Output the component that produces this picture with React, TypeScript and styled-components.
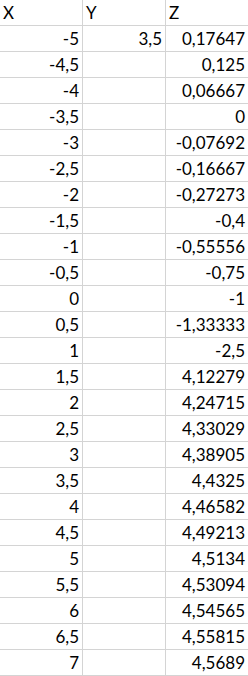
import React from 'react';
import styled, { createGlobalStyle } from 'styled-components';

const rows: [string, string, string][] = [
  ['-5', '3,5', '0,17647'],
  ['-4,5', '', '0,125'],
  ['-4', '', '0,06667'],
  ['-3,5', '', '0'],
  ['-3', '', '-0,07692'],
  ['-2,5', '', '-0,16667'],
  ['-2', '', '-0,27273'],
  ['-1,5', '', '-0,4'],
  ['-1', '', '-0,55556'],
  ['-0,5', '', '-0,75'],
  ['0', '', '-1'],
  ['0,5', '', '-1,33333'],
  ['1', '', '-2,5'],
  ['1,5', '', '4,12279'],
  ['2', '', '4,24715'],
  ['2,5', '', '4,33029'],
  ['3', '', '4,38905'],
  ['3,5', '', '4,4325'],
  ['4', '', '4,46582'],
  ['4,5', '', '4,49213'],
  ['5', '', '4,5134'],
  ['5,5', '', '4,53094'],
  ['6', '', '4,54565'],
  ['6,5', '', '4,55815'],
  ['7', '', '4,5689'],
];

const headers = ['X', 'Y', 'Z'];

export default function App() {
  return (
    <>
      <GlobalStyle />
      <Sheet>
        {headers.map(h => (
          <Cell key={h} $header>
            {h}
          </Cell>
        ))}
        {rows.map((row, i) =>
          row.map((value, j) => <Cell key={`${i}-${j}`}>{value}</Cell>)
        )}
      </Sheet>
    </>
  );
}

const GlobalStyle = createGlobalStyle`
  html, body {
    margin: 0;
    background: #ffffff;
    overflow: hidden;
  }
`;

const Sheet = styled.div`
  display: grid;
  grid-template-columns: 83px 83px 83px;
  grid-auto-rows: 26px;
  width: 249px;
  font-family: Lato, 'Open Sans', sans-serif;
  font-size: 17px;
  color: #000000;
`;

const Cell = styled.div<{ $header?: boolean }>`
  box-sizing: border-box;
  border-right: 1px solid #d4d4d4;
  border-bottom: 1px solid #d4d4d4;
  display: flex;
  align-items: flex-end;
  justify-content: ${p => (p.$header ? 'flex-start' : 'flex-end')};
  padding: 0 3px 2px 3px;
  line-height: 20px;
  white-space: nowrap;
`;
